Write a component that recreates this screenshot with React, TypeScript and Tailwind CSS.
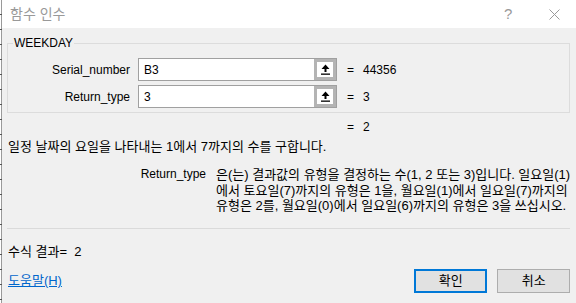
import type { ReactNode } from "react";

const font = "font-['Liberation_Sans','Noto_Sans_CJK_KR',sans-serif]";

function RefButton() {
  return (
    <div className="flex h-full w-[22px] items-center justify-center bg-[#b4b4b4] p-[3px]">
      <div className="flex h-full w-full items-center justify-center bg-white">
        <svg width="9" height="11" viewBox="0 0 9 11">
          <path d="M4.5 0.5 L8.5 5 L5.5 5 L5.5 8 L3.5 8 L3.5 5 L0.5 5 Z" fill="#000" />
          <rect x="0" y="9.5" width="9" height="1.3" fill="#000" />
        </svg>
      </div>
    </div>
  );
}

function ArgRow({ label, value, result }: { label: string; value: string; result: string }) {
  return (
    <div className="flex items-center">
      <div className="w-[122px] text-right">{label}</div>
      <div className="ml-[8px] flex h-[23px] w-[199px] border border-[#a0a0a0]">
        <div className="flex flex-1 items-center bg-white pl-[5px]">{value}</div>
        <RefButton />
      </div>
      <div className="ml-[10px] w-[16px]">=</div>
      <div>{result}</div>
    </div>
  );
}

function Btn({ children, primary }: { children: ReactNode; primary?: boolean }) {
  return (
    <button
      className={`flex h-[24px] w-[73px] items-center justify-center bg-[#e1e1e1] text-[13px] ${
        primary ? "border-2 border-[#0078d7]" : "border border-[#adadad]"
      }`}
    >
      {children}
    </button>
  );
}

export default function App() {
  const ticks = Array.from({ length: 20 }, (_, i) => i);
  return (
    <div className={`flex h-[303px] w-[576px] overflow-hidden bg-white text-[12px] leading-[16px] text-black ${font}`}>
      <div className="relative w-[2px] border-r border-[#9a9a9a] bg-white">
        {ticks.map((i) => (
          <div key={i} className="mt-[14px] h-px w-[2px] bg-[#555]" />
        ))}
      </div>

      <div className="flex flex-1 flex-col bg-[#f0f0f0]">
        <div className="flex h-[28px] items-center bg-white">
          <div className="pl-[8px] text-[14px] text-[#999]">함수 인수</div>
          <div className="flex-1" />
          <div className="flex h-full w-[46px] items-center justify-center text-[15px] font-light text-[#999]">?</div>
          <div className="flex h-full w-[46px] items-center justify-center">
            <svg width="11" height="11" viewBox="0 0 11 11">
              <path d="M0.5 0.5 L10.5 10.5 M10.5 0.5 L0.5 10.5" stroke="#9a9a9a" strokeWidth="1" />
            </svg>
          </div>
        </div>

        <div className="flex flex-1 flex-col pl-[5px] pr-[7px]">
          <fieldset className="mt-[7px] border border-[#dcdcdc] pb-[4px] pt-[7px]">
            <legend className="ml-[5px] px-px">WEEKDAY</legend>
            <div className="flex flex-col gap-[4px]">
              <ArgRow label="Serial_number" value="B3" result="44356" />
              <ArgRow label="Return_type" value="3" result="3" />
            </div>
          </fieldset>

          <div className="mt-[6px] flex pl-[340px]">
            <div className="w-[16px]">=</div>
            <div>2</div>
          </div>

          <div className="mt-[4px] pl-[1px] text-[13px]">일정 날짜의 요일을 나타내는 1에서 7까지의 수를 구합니다.</div>

          <div className="mt-[12px] flex leading-[15.5px]">
            <div className="w-[199px] text-right">Return_type</div>
            <div className="ml-[10px] whitespace-nowrap text-[13px]">
              은(는) 결과값의 유형을 결정하는 수(1, 2 또는 3)입니다. 일요일(1)
              <br />
              에서 토요일(7)까지의 유형은 1을, 월요일(1)에서 일요일(7)까지의
              <br />
              유형은 2를, 월요일(0)에서 일요일(6)까지의 유형은 3을 쓰십시오.
            </div>
          </div>

          <div className="mt-[14px] h-px bg-[#dadada]" />

          <div className="mt-[15px] pl-[1px] text-[13px]">
            수식 결과=&nbsp;&nbsp;2
          </div>

          <div className="mt-[9px] flex items-center">
            <a className="mt-[1px] pl-[1px] text-[13px] text-[#0066cc] underline">도움말(H)</a>
            <div className="flex-1" />
            <div className="flex gap-[10px]">
              <Btn primary>확인</Btn>
              <Btn>취소</Btn>
            </div>
          </div>
        </div>
      </div>
    </div>
  );
}
